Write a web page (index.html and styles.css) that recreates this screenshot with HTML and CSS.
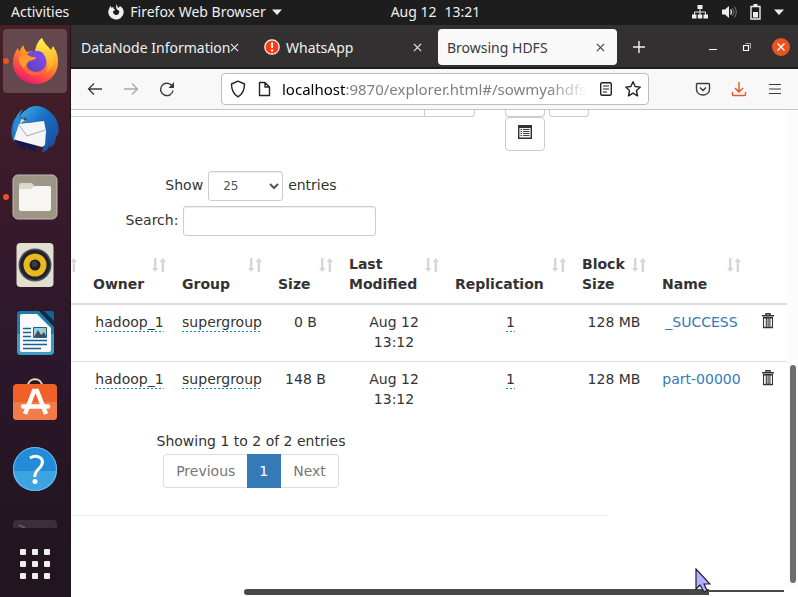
FILE: index.html
```html
<!DOCTYPE html>
<html lang="en">
<head>
<meta charset="utf-8">
<title>Browsing HDFS</title>
<link rel="stylesheet" href="styles.css">
</head>
<body>
<svg width="0" height="0" class="defs" aria-hidden="true">
  <defs>
    <symbol id="close" viewBox="0 0 10 10"><path d="M1 1l8 8M9 1L1 9" fill="none" stroke="currentColor" stroke-width="1.2"/></symbol>
    <symbol id="sort" viewBox="0 0 14 14"><path d="M2 0h2.400v10H6.400L3.200 14 0 10h2zM9.600 14h2.400V4h2L10.800 0 7.600 4h2z" fill="#d6d6d6"/></symbol>
    <symbol id="trash" viewBox="0 0 14 16"><path d="M5 2V.700h4V2M1 2.700h12" fill="none" stroke="#333" stroke-width="1.400"/><path d="M2.500 5v9.300h9V5zM5.300 5v9M7.100 5v9M8.900 5v9" fill="#f2f2f2" stroke="#333" stroke-width="1"/><path d="M2 4.500h10M2 14.700h10" stroke="#333" stroke-width="1.200"/></symbol>
  </defs>
</svg>

<header class="topbar">
  <div class="topbar-left">
    <button class="plain">Activities</button>
    <button class="plain app-menu">
      <svg width="16" height="16" viewBox="0 0 16 16"><path d="M8.500 0.300C9.600 2 9.300 3 10.500 4L12 2c2.300 1.300 3.700 3.600 3.700 6.300A7.700 7.400 0 1 1 1 5L2.300 1.800l1.200 1.900 1.800-.700.300 1.700 1.700.800-2.300 2C5 10 6.800 11.300 8.500 11c2.300-.400 3.400-2.700 2.300-4.600C9 6.200 7.300 3.500 8.500.300z" fill="#f0f0f0"/></svg>
      <span>Firefox Web Browser</span>
      <svg width="10" height="6" viewBox="0 0 10 6"><path d="M0 .500h10L5 6z" fill="#eee"/></svg>
    </button>
  </div>
  <button class="plain clock"><span>Aug 12</span><span>13:21</span></button>
  <button class="plain status" aria-label="System menu">
    <svg width="16" height="16" viewBox="0 0 16 16"><path d="M5.500 1h5v4h-5zM0 10.500h4.500v4H0zM5.800 10.500h4.500v4H5.800zM11.500 10.500H16v4h-4.500z" fill="#eee"/><path d="M8 5v6M2.500 11V8h11v3" fill="none" stroke="#eee"/></svg>
    <svg width="16" height="16" viewBox="0 0 16 16"><path d="M1 5.500h3L8 2v12l-4-3.500H1z" fill="#eee"/><path d="M9.500 5.500q2 2.500 0 5" fill="none" stroke="#ddd" stroke-width="1.300"/><path d="M11.500 4q3 4 0 8M13.500 2.500q3.500 5.500 0 11" fill="none" stroke="#777"/></svg>
    <svg width="11" height="16" viewBox="0 0 11 16"><path d="M1 2.500h9V15H1z" fill="none" stroke="#eee" stroke-width="1.400"/><path d="M3.500 0h4v2.500h-4zM3 8h5v5.500H3z" fill="#eee"/></svg>
    <svg width="10" height="6" viewBox="0 0 10 6"><path d="M0 .500h10L5 6z" fill="#eee"/></svg>
  </button>
</header>

<div class="desktop">
  <nav class="dock" aria-label="Dock">
    <button class="launcher active running" aria-label="Firefox">
      <svg width="48" height="48" viewBox="0 0 48 48">
        <defs>
          <linearGradient id="ff1" x1=".8" y1="0" x2=".3" y2="1"><stop offset="0" stop-color="#fff04a"/><stop offset=".4" stop-color="#ffa02a"/><stop offset=".72" stop-color="#ff5040"/><stop offset="1" stop-color="#e8147a"/></linearGradient>
          <linearGradient id="ff2" x1="1" y1="0" x2="0" y2="1"><stop offset="0" stop-color="#8a4dfa"/><stop offset="1" stop-color="#5840b5"/></linearGradient>
          <linearGradient id="ff3" x1=".5" y1="0" x2=".5" y2="1"><stop offset="0" stop-color="#fff44c"/><stop offset="1" stop-color="#ff9a24"/></linearGradient>
        </defs>
        <path d="M31 1c2 5 4 7 9 12l2-4c4 6 5 10 5 16 0 13-10 22-22 22S2 38 2 26C2 19 5 13 7 11l1 4 4-7c1 3 2 5 4 7 4-1 5-1 8 0 1-6 3-11 7-14z" fill="url(#ff1)"/>
        <path d="M31 1c2 7 12 11 12 22 0 6-3 10-8 13 4-10 0-18-11-21 1-6 3-11 7-14z" fill="url(#ff3)"/>
        <circle cx="25" cy="24.500" r="10.500" fill="url(#ff2)"/>
        <path d="M16 18c2-5 12-6 17-1-3-1-5 0-6 1z" fill="#7846e0"/>
        <path d="M8 20c3-2 6-3 9-2 2 2 5 2 8 2-1 4-6 3-8 5-2 2-2 5-1 8-5-2-9-7-8-13z" fill="#ff9a2c"/>
        <path d="M15 27c1 7 10 11 18 7-6 7-17 5-20-2z" fill="#ff6540"/>
      </svg>
    </button>
    <button class="launcher" aria-label="Thunderbird">
      <svg width="50" height="50" viewBox="0 0 50 50">
        <defs><linearGradient id="tb" x1="0" y1="0" x2="1" y2="1"><stop offset="0" stop-color="#43b4ed"/><stop offset=".4" stop-color="#1b71c5"/><stop offset="1" stop-color="#174798"/></linearGradient></defs>
        <path d="M4 34l5 8 7 5-2-5 12 6-1-7z" fill="#17184f"/>
        <path d="M16 6c6-6 16-5 23 1 8 6 11 15 9 24l-2 1c0 6-2 9-6 12v-3c-2 4-4 7-8 7 2-6 2-10 1-15C32 19 25 15 14 20l-4 4c-2-8 0-15 6-18z" fill="url(#tb)"/>
        <path d="M5 14c-4 7-5 17-1 24l5-13 5-5-1-7z" fill="#2577c5"/>
        <path d="M13 5c-3 4-4 9-3 14l-5 11C2 20 6 9 13 5z" fill="#2b8bd6"/>
        <path d="M4 35l5-15 25-3 2 10-1 14-3 2-26-7z" fill="#f5f5f7"/>
        <path d="M9 21l8 11 18-6" fill="none" stroke="#aaa"/>
        <circle cx="15" cy="15" r="1.500" fill="#5a3c30"/><path d="M15 16l-5 4 1-5z" fill="#ddd"/>
      </svg>
    </button>
    <button class="launcher running" aria-label="Files">
      <svg width="46" height="46" viewBox="0 0 46 46"><rect x="1" y="1" width="44" height="44" rx="5" fill="#9d9686" stroke="#c0bcb0" stroke-width="1"/><path d="M7 14V11q0-2 2-2h10q2 0 3 3h-1v5H7z" fill="#dcd8ca"/><path d="M7 15h12l3-3h15q2 0 2 2v21q0 2-2 2H9q-2 0-2-2z" fill="#f7f6f3"/></svg>
    </button>
    <button class="launcher" aria-label="Rhythmbox">
      <svg width="46" height="46" viewBox="0 0 46 46"><rect x="4.500" y="1" width="37" height="44" rx="4" fill="#e2ded2"/><circle cx="23" cy="23" r="16.500" fill="#4d505b"/><circle cx="23" cy="23" r="15" fill="#20222c"/><circle cx="23" cy="23" r="11.500" fill="#eab91d"/><circle cx="23" cy="23" r="5.500" fill="#202024"/><circle cx="22.500" cy="22" r="3" fill="#3c3c42"/></svg>
    </button>
    <button class="launcher" aria-label="LibreOffice Writer">
      <svg width="46" height="46" viewBox="0 0 46 46"><path d="M8 1h20l14 14v26q0 4-4 4H9q-4 0-4-4V5q0-4 3-4z" fill="#1b7caf"/><path d="M5 24h37v17q0 4-4 4H9q-4 0-4-4z" fill="#3c9bc9"/><path d="M10 4h15l14 14v22q0 2-2 2H10q-2 0-2-2V6q0-2 2-2z" fill="#fafafa"/><path d="M27 1h5l10 10v6z" fill="#12283c"/><path d="M32 1h8q2 0 2 2v8z" fill="#126597"/><path d="M11 18.500h8M11 22.500h8M11 26.500h8M11 30.500h24M11 34.500h24M11 38.500h18" stroke="#126597" stroke-width="1.600"/><path d="M21.500 17.500h13v10h-13z" fill="#8fd0ed" stroke="#126597"/><path d="M22 27l4-7 3 5 3-3 2.500 5z" fill="#4c4c4e"/><circle cx="32.500" cy="19.500" r="1.700" fill="#f4b33c"/></svg>
    </button>
    <button class="launcher" aria-label="Ubuntu Software">
      <svg width="46" height="46" viewBox="0 0 46 46"><path d="M16 8c0-9 14-9 14 0" fill="none" stroke="#f2d6ad" stroke-width="2"/><rect x="1" y="6" width="44" height="36" rx="4" fill="#f06128"/><path d="M1 24h44v14q0 4-4 4H5q-4 0-4-4z" fill="#f27c49"/><path d="M13 36l9-23h3l9 23" fill="none" stroke="#fff" stroke-width="4.500"/><path d="M11 28.500h25" stroke="#fff" stroke-width="4.500" stroke-linecap="round"/></svg>
    </button>
    <button class="launcher" aria-label="Help">
      <svg width="46" height="46" viewBox="0 0 46 46"><circle cx="23" cy="23" r="22" fill="#238bd8"/><path d="M1 25h44a22 20 0 0 1-44 0z" fill="#3da4e2"/><circle cx="23" cy="23" r="21.500" fill="none" stroke="#74bde8"/><path d="M18 12c7-4 14 0 12 6-1 5-8 6-7 13" fill="none" stroke="#fff" stroke-width="3"/><circle cx="23" cy="35.500" r="2.500" fill="#fff"/></svg>
    </button>
    <button class="launcher-cut" aria-label="Terminal">
      <svg width="46" height="9" viewBox="0 0 46 9"><path d="M1 9V5q0-4 4-4h36q4 0 4 4v4z" fill="#3b3039"/><path d="M7 6l6 3" stroke="#6b6169" stroke-width="1.500"/></svg>
    </button>
    <button class="show-apps" aria-label="Show Applications"><i></i><i></i><i></i><i></i><i></i><i></i><i></i><i></i><i></i></button>
  </nav>

  <div class="browser">
    <div class="tabstrip">
      <div class="tab"><span class="tab-title">DataNode Information</span><button class="tab-close" aria-label="Close tab"><svg width="9" height="9"><use href="#close"/></svg></button></div>
      <div class="tab">
        <svg class="favicon" width="16" height="16" viewBox="0 0 16 16"><circle cx="8" cy="8" r="7.200" fill="#ff3b0f" stroke="#fff" stroke-width="1.200"/><path d="M8 3.500v5.500M8 10.500v2" stroke="#fff" stroke-width="2"/></svg>
        <span class="tab-title">WhatsApp</span><button class="tab-close" aria-label="Close tab"><svg width="9" height="9"><use href="#close"/></svg></button>
      </div>
      <div class="tab selected"><span class="tab-title">Browsing HDFS</span><button class="tab-close" aria-label="Close tab"><svg width="9" height="9"><use href="#close"/></svg></button></div>
      <button class="plain new-tab" aria-label="New tab"><svg width="12" height="12" viewBox="0 0 12 12"><path d="M6 0v12M0 6h12" stroke="#f0f0f0" stroke-width="1.400"/></svg></button>
      <div class="window-controls">
        <button class="plain" aria-label="Minimize"><svg width="18" height="18" viewBox="0 0 18 18"><path d="M5 11.500h8" stroke="#fff"/></svg></button>
        <button class="plain" aria-label="Restore"><svg width="18" height="18" viewBox="0 0 18 18"><path d="M5.500 7.500h5v5h-5z" fill="none" stroke="#fff" stroke-width="1.200"/><path d="M7.500 5.500h5v5" fill="none" stroke="#aaa"/></svg></button>
        <button class="plain" aria-label="Close"><svg width="18" height="18" viewBox="0 0 18 18"><circle cx="9" cy="9" r="9" fill="#e95420"/><path d="M5.500 5.500l7 7M12.500 5.500l-7 7" stroke="#fff" stroke-width="1.400"/></svg></button>
      </div>
    </div>

    <div class="toolbar">
      <div class="nav-buttons">
        <button class="plain" aria-label="Back"><svg width="16" height="16" viewBox="0 0 16 16"><path d="M15 8H1.500M7 2.500L1.500 8 7 13.500" fill="none" stroke="#3b3b3f" stroke-width="1.300"/></svg></button>
        <button class="plain" aria-label="Forward"><svg width="16" height="16" viewBox="0 0 16 16"><path d="M1 8h13.500M9 2.500L14.500 8 9 13.500" fill="none" stroke="#a9a9ab" stroke-width="1.300"/></svg></button>
        <button class="plain" aria-label="Reload"><svg width="16" height="16" viewBox="0 0 16 16"><path d="M14 9.500A6.200 6.200 0 1 1 12 3.800L14 6" fill="none" stroke="#3b3b3f" stroke-width="1.400"/><path d="M15 1v6H9.500z" fill="#3b3b3f"/></svg></button>
      </div>
      <div class="urlbar">
        <svg width="16" height="18" viewBox="0 0 16 18"><path d="M8 1.200L14.500 4c0 6-1.500 10-6.500 12.800C3 14 1.500 10 1.500 4z" fill="none" stroke="#222" stroke-width="1.400" stroke-linejoin="round"/></svg>
        <svg width="14" height="16" viewBox="0 0 14 16"><path d="M2.500 1.500H8L12.500 6v8.500h-10zM8 1.500V6h4.500" fill="none" stroke="#222" stroke-width="1.400" stroke-linejoin="round"/></svg>
        <div class="url" role="textbox" aria-label="Address" contenteditable="true" spellcheck="false"><b>localhost</b>:9870/explorer.html#/sowmyahdfs/</div>
        <svg width="14" height="16" viewBox="0 0 14 16"><rect x="1.700" y="1.700" width="10.600" height="12.600" rx="1.500" fill="none" stroke="#222" stroke-width="1.400"/><path d="M4 5h6M4 8h6M4 11h4" stroke="#222" stroke-width="1.200"/></svg>
        <svg width="18" height="18" viewBox="0 0 18 18"><path d="M9 1.700l2.200 4.800 5.100.600-3.800 3.500 1 5.200L9 13.200l-4.500 2.600 1-5.200L1.700 7.100l5.100-.600z" fill="none" stroke="#222" stroke-width="1.400" stroke-linejoin="round"/></svg>
      </div>
      <div class="tool-buttons">
        <button class="plain" aria-label="Save to Pocket"><svg width="16" height="16" viewBox="0 0 16 16"><path d="M2.500 2.500h11q1 0 1 1V8c0 8-13 8-13 0V3.500q0-1 1-1zM5 6.500l3 3 3-3" fill="none" stroke="#3b3b3f" stroke-width="1.400"/></svg></button>
        <button class="plain" aria-label="Downloads"><svg width="16" height="16" viewBox="0 0 16 16"><path d="M8 1v10M4 7l4 4 4-4M1.500 11v2.500q0 1 1 1h11q1 0 1-1V11" fill="none" stroke="#e95420" stroke-width="1.400"/></svg></button>
        <button class="plain" aria-label="Menu"><svg width="16" height="16" viewBox="0 0 16 16"><path d="M2 3.500h12M2 8h12M2 12.500h12" stroke="#3b3b3f" stroke-width="1.200"/></svg></button>
      </div>
    </div>

    <div class="viewport">
      <main class="page">
        <div class="path-row">
          <div class="path-input"></div><div class="path-go"></div>
          <div class="tool-stack">
            <div class="btn-edge"></div><div class="btn-edge"></div>
            <button class="btn" aria-label="Cut and paste"><svg width="14" height="14" viewBox="0 0 14 14"><path d="M.700.700h12.600v12.600H.700z" fill="#f4f4f4" stroke="#333" stroke-width="1.400"/><path d="M0 1.500h14" stroke="#333" stroke-width="3"/><path d="M2.500 4.500h1.500M5 4.500h6.500M2.500 6.500h1.500M5 6.500h6.500M2.500 8.500h1.500M5 8.500h6.500M2.500 10.500h1.500M5 10.500h6.500" stroke="#444"/></svg></button>
          </div>
        </div>

        <div class="controls">
          <label>Show <select><option>25</option></select> entries</label>
          <label>Search: <input type="search"></label>
        </div>

        <table>
          <colgroup><col class="c-edge"><col class="c-owner"><col class="c-group"><col class="c-size"><col class="c-date"><col class="c-repl"><col class="c-block"><col class="c-name"><col></colgroup>
          <thead>
            <tr>
              <th class="edge"><div class="head"><svg width="14" height="14"><use href="#sort"/></svg></div></th>
              <th><div class="head"><span>Owner</span><svg width="14" height="14"><use href="#sort"/></svg></div></th>
              <th><div class="head"><span>Group</span><svg width="14" height="14"><use href="#sort"/></svg></div></th>
              <th><div class="head"><span>Size</span><svg width="14" height="14"><use href="#sort"/></svg></div></th>
              <th><div class="head"><span>Last<br>Modified</span><svg width="14" height="14"><use href="#sort"/></svg></div></th>
              <th><div class="head"><span>Replication</span><svg width="14" height="14"><use href="#sort"/></svg></div></th>
              <th><div class="head"><span>Block<br>Size</span><svg width="14" height="14"><use href="#sort"/></svg></div></th>
              <th><div class="head"><span>Name</span><svg width="14" height="14"><use href="#sort"/></svg></div></th>
              <th></th>
            </tr>
          </thead>
          <tbody>
            <tr>
              <td></td><td><span class="editable">hadoop_1</span></td><td><span class="editable">supergroup</span></td><td>0 B</td><td>Aug 12 13:12</td><td><span class="editable">1</span></td><td>128 MB</td><td><a href="#">_SUCCESS</a></td>
              <td><button class="plain delete" aria-label="Delete"><svg width="14" height="16"><use href="#trash"/></svg></button></td>
            </tr>
            <tr>
              <td></td><td><span class="editable">hadoop_1</span></td><td><span class="editable">supergroup</span></td><td>148 B</td><td>Aug 12 13:12</td><td><span class="editable">1</span></td><td>128 MB</td><td><a href="#">part-00000</a></td>
              <td><button class="plain delete" aria-label="Delete"><svg width="14" height="16"><use href="#trash"/></svg></button></td>
            </tr>
          </tbody>
        </table>

        <div class="footer-controls">
          <div>Showing 1 to 2 of 2 entries</div>
          <nav class="pagination" aria-label="Pages"><a href="#">Previous</a><a href="#" class="current">1</a><a href="#">Next</a></nav>
        </div>
        <hr>
      </main>
      <div class="scroll-y"><div class="thumb-y"></div></div>
      <div class="scroll-x"><div class="thumb-x"></div><div class="trail-x"></div></div>
      <svg class="pointer" width="16" height="25" viewBox="0 0 16 25"><path d="M1 1v20l4-4 4 7 3-1.500-3-6.500h6z" fill="#b4b0ff" stroke="#1c1c30" stroke-width="1.200"/></svg>
    </div>
  </div>
</div>
</body>
</html>
```

FILE: styles.css
```css
* { box-sizing: border-box; }

body {
  margin: 0;
  height: 100vh;
  overflow: hidden;
  display: flex;
  flex-direction: column;
  font: 14px/20px "DejaVu Sans", sans-serif;
  color: #333;
}

svg { display: block; flex: none; }
.defs { position: absolute; }

button { font: inherit; color: inherit; cursor: default; }
.plain { border: 0; padding: 0; background: none; }

/* System bar */
.topbar {
  display: grid;
  grid-template-columns: 1fr auto 1fr;
  align-items: center;
  height: 25px;
  padding: 0 14px 2px 11px;
  background: #1d1d1d;
  color: #f0f0f0;
  font-family: "Noto Sans", sans-serif;
}
.topbar-left { display: flex; gap: 39px; }
.app-menu { display: flex; align-items: center; gap: 6px; white-space: nowrap; }
.clock { display: flex; gap: 8px; margin-right: -76px; }
.status { display: flex; align-items: center; justify-content: flex-end; gap: 13px; }

.desktop { flex: 1; min-height: 0; display: flex; }

/* Dock */
.dock {
  width: 71px;
  flex: none;
  display: flex;
  flex-direction: column;
  align-items: center;
  gap: 4px;
  padding-top: 4px;
  overflow: hidden;
  border-right: 1px solid #1f121c;
  background: linear-gradient(#461f26, #391a2b 30%, #2b172b 60%, #21151f 95%);
}
.launcher {
  position: relative;
  flex: none;
  display: grid;
  place-items: center;
  width: 64px;
  height: 64px;
  padding: 0;
  border: 0;
  border-radius: 4px;
  background: none;
}
.active { background: #65484e; }
.running::before {
  content: "";
  position: absolute;
  left: 0;
  width: 6px;
  height: 6px;
  border-radius: 50%;
  background: #e95420;
}
.launcher-cut { border: 0; padding: 14px 0 0; background: none; }
.show-apps {
  display: grid;
  grid-template-columns: repeat(3, 6px);
  gap: 6px;
  margin-top: 17px;
  padding: 0;
  border: 0;
  background: none;
}
.show-apps i { height: 6px; border-radius: 1px; background: #eee; }

/* Browser chrome */
.browser {
  flex: 1;
  min-width: 0;
  display: flex;
  flex-direction: column;
  font-family: "Noto Sans", sans-serif;
}
.tabstrip {
  flex: none;
  display: flex;
  align-items: center;
  height: 44px;
  padding: 2px 8px 0 1px;
  background: #323031;
  border-bottom: 2px solid #1d1d1d;
  color: #f0f0f0;
}
.tab {
  flex: 0 1 179px;
  min-width: 0;
  display: flex;
  align-items: center;
  height: 36px;
  margin-right: 4px;
  padding: 0 12px 0 9px;
  border-radius: 4px;
  white-space: nowrap;
}
.selected { background: #f9f9fa; color: #3b3b3f; margin-right: 16px; }
.favicon { margin-right: 6px; }
.tab-title { flex: 1; min-width: 0; overflow: hidden; padding-top: 1px; }
.tab-close { border: 0; padding: 0; background: none; }
.window-controls { display: flex; gap: 16px; margin-left: auto; }

.toolbar {
  flex: none;
  display: flex;
  align-items: center;
  justify-content: space-between;
  height: 41px;
  padding: 0 15px 0 16px;
  background: #f8f8f8;
  border-bottom: 1px solid #c4c4c4;
}
.nav-buttons, .tool-buttons { display: flex; gap: 20px; }
.urlbar {
  flex: 0 1 428px;
  min-width: 0;
  display: flex;
  align-items: center;
  gap: 11px;
  height: 32px;
  padding: 0 6px 0 8px;
  border: 1px solid #bdbdbd;
  border-radius: 4px;
  background: #fff;
}
.url {
  flex: 1;
  min-width: 0;
  overflow: hidden;
  white-space: nowrap;
  font-size: 15px;
  color: #808080;
  -webkit-mask-image: linear-gradient(90deg, #000 calc(100% - 40px), transparent);
  mask-image: linear-gradient(90deg, #000 calc(100% - 40px), transparent);
}
.url b { font-weight: 400; color: #000; }

/* Web page */
.viewport {
  flex: 1;
  min-height: 0;
  display: grid;
  grid-template: minmax(0, 1fr) 9px / minmax(0, 1fr) 11px;
  position: relative;
  background: #fff;
  font-family: "DejaVu Sans", sans-serif;
}
.page { overflow: hidden; }

.path-row { display: flex; }
.path-input, .path-go, .btn-edge { height: 7px; border: 1px solid #ccc; border-top: 0; }
.path-input { flex: 0 1 353px; border-width: 0 0 1px; }
.path-go { flex: 0 0 51px; border-radius: 0 0 4px 0; }
.tool-stack { display: grid; grid-template-columns: 40px 40px; column-gap: 4px; margin-left: 30px; }
.btn-edge { border-radius: 0 0 4px 4px; }
.btn {
  display: grid;
  justify-content: center;
  height: 34px;
  padding: 7px 0 0;
  border: 1px solid #ccc;
  border-radius: 4px;
  background: #fff;
}

.controls, .footer-controls {
  max-width: 360px;
  display: flex;
  flex-direction: column;
  align-items: center;
}
.controls { gap: 5px; margin: 20px 0 10px; }
.controls label { display: flex; align-items: baseline; gap: 5px; }
select, input {
  height: 30px;
  border: 1px solid #ccc;
  border-radius: 3px;
  background: #fff;
  color: #555;
  font: 12px/18px "DejaVu Sans", sans-serif;
  box-shadow: inset 0 1px 1px rgba(0, 0, 0, .075);
}
select { width: 75px; padding: 5px 10px; }
input { width: 193px; padding: 5px 10px; }

table { width: 100%; table-layout: fixed; border-collapse: separate; border-spacing: 0; }
.c-edge { width: 14px; }
.c-owner { width: 89px; }
.c-group { width: 96px; }
.c-size { width: 71px; }
.c-date { width: 106px; }
.c-repl { width: 127px; }
.c-block { width: 80px; }
.c-name { width: 95px; }
th, td { padding: 8px; }
th { padding-bottom: 9px; border-bottom: 2px solid #ddd; text-align: left; }
td { text-align: center; vertical-align: top; }
tbody tr + tr td { border-top: 1px solid #ddd; }
.edge { padding-left: 0; overflow: hidden; }
.head { display: flex; justify-content: space-between; align-items: flex-end; height: 40px; }
.head svg { align-self: flex-start; margin-top: 4px; }
.edge .head { justify-content: flex-end; }
td:first-child { padding: 0; }
tbody td { padding-top: 7px; padding-bottom: 9px; }
.editable {
  padding-bottom: 2px;
  background: repeating-linear-gradient(90deg, #08c 0 2px, transparent 2px 4px) bottom / 100% 1px no-repeat;
}
a { color: #337ab7; text-decoration: none; }
.delete { padding-top: 1px; }

.footer-controls { gap: 3px; margin-top: 13px; }
.pagination { display: flex; }
.pagination a {
  padding: 6px 12px;
  border: 1px solid #ddd;
  color: #777;
}
.pagination a + a { border-left: 0; }
.pagination a:first-child { border-right: 0; border-radius: 4px 0 0 4px; }
.pagination a:last-child { border-radius: 0 4px 4px 0; }
.pagination .current { background: #337ab7; border-color: #337ab7; color: #fff; }
hr { width: 75%; margin: 27px 0 0; border: 0; border-top: 1px solid #eee; }

/* Scrollbars */
.scroll-y { display: flex; flex-direction: column; justify-content: flex-end; align-items: center; padding-bottom: 5px; background: #fcfcfc; }
.thumb-y { width: 6px; height: 46%; border-radius: 3px; background: #6e6e6e; }
.scroll-x { grid-column: 1 / -1; display: flex; padding: 1px 14px 0 173px; }
.thumb-x { flex: 465; height: 6px; border-radius: 3px 0 0 3px; background: #484848; }
.trail-x { flex: 75; height: 2px; margin-top: 1px; background: #484848; }

.pointer { position: absolute; left: 624px; top: 458px; }
```
